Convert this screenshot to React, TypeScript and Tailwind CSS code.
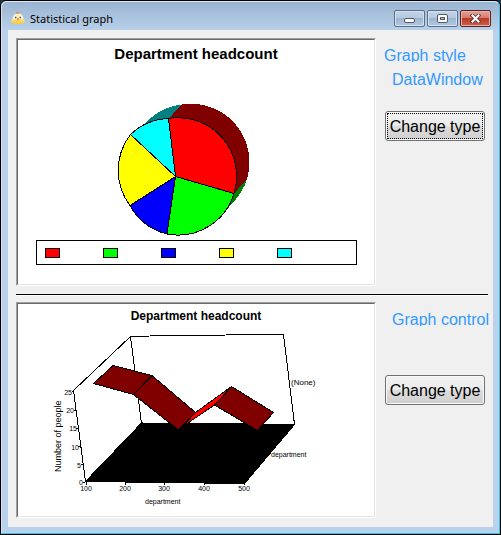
import type { ReactNode } from "react";

const legend = [
  { key: "100", color: "bg-[#ff0000]" },
  { key: "200", color: "bg-[#00ff00]" },
  { key: "300", color: "bg-[#0000ff]" },
  { key: "400", color: "bg-[#ffff00]" },
  { key: "500", color: "bg-[#00ffff]" },
];

function AppIcon() {
  return (
    <svg className="h-4 w-4" viewBox="0 0 16 16" aria-hidden="true">
      <defs>
        <linearGradient id="chick" x1="0" y1="0" x2="0" y2="1">
          <stop offset="0" stopColor="#fff6c8" />
          <stop offset="1" stopColor="#fbcb35" />
        </linearGradient>
      </defs>
      <path d="M6.500 3.500V1l1.500 1L9.500 1.500v2z" fill="#e8382c" />
      <path d="M8 2.500c-3.500 0-4.800 2-5.200 4.500L1.200 9.500c-.4 2.500 3 3.500 6.800 3.500s7.200-1 6.800-3.500L13.200 7c-.4-2.500-1.700-4.500-5.200-4.500z" fill="url(#chick)" />
      <circle cx="5.200" cy="6.500" r="2" fill="#fff" />
      <circle cx="10.800" cy="6.500" r="2" fill="#fff" />
      <circle cx="5.700" cy="6.500" r=".9" fill="#555" />
      <circle cx="10.300" cy="6.500" r=".9" fill="#555" />
      <path d="M6.800 7.200h2.400L8 10z" fill="#ee8122" />
    </svg>
  );
}

function CaptionButton({ label, close, children }: { label: string; close?: boolean; children: ReactNode }) {
  const tone = close
    ? "border-[#5c2020] bg-[linear-gradient(#e4a498,#d5786a_48%,#bb3a25_50%,#cc6048)] shadow-[inset_0_0_0_1px_#e8b0a6]"
    : "border-[#5c6f86] bg-[linear-gradient(#c4d5e8,#b2c7de_48%,#9bb4d0_50%,#b3cae3)] shadow-[inset_0_0_0_1px_#d3e1f0]";
  return (
    <button type="button" aria-label={label} className={`flex h-[17px] w-[31px] items-center justify-center rounded-xs border ${tone}`}>
      {children}
    </button>
  );
}

function Panel({ children }: { children: ReactNode }) {
  return (
    <section className="min-w-0 flex-1 border border-t-[#a0a0a0] border-r-white border-b-white border-l-[#a0a0a0]">
      <div className="border border-t-[#696969] border-r-[#e3e3e3] border-b-[#e3e3e3] border-l-[#696969] bg-white">
        {children}
      </div>
    </section>
  );
}

function ChangeType({ focused }: { focused?: boolean }) {
  return (
    <button
      type="button"
      className="h-[30px] w-[100px] rounded-[3px] border border-[#707070] bg-[linear-gradient(#f2f2f2,#ebebeb_48%,#dddddd_50%,#cfcfcf)] p-px text-base leading-6 whitespace-nowrap text-black shadow-[inset_0_0_0_1px_#fafafa]"
    >
      <span className={`flex h-full items-center justify-center border border-dotted pt-0.5 ${focused ? "border-black" : "border-transparent"}`}>
        Change type
      </span>
    </button>
  );
}

function PieChart() {
  return (
    <svg viewBox="18 68 356 172" className="block w-full" role="img" aria-label="Pie chart of department headcount">
      <g shapeRendering="crispEdges">
        <path d="M168.500 119L181.500 104.500A58.500 58.500 0 0 0 146 122.700L133 137L176 177z" fill="#008080" />
        <path d="M168.500 119L181.500 104.500A58.500 58.500 0 0 1 247 179L234 193.500L176 177z" fill="#800000" />
        <path d="M234 193.500L247 179A58.500 58.500 0 0 1 233 202.500L220 217L176 177z" fill="#008000" />
        <g stroke="#000" strokeWidth="1" strokeLinejoin="round">
          <path d="M175.500 176.500L168.500 118.500A58.500 58.500 0 0 1 234 193.500z" fill="#f00" />
          <path d="M175.500 176.500L234 193.500A58.500 58.500 0 0 1 167 234z" fill="#0f0" />
          <path d="M175.500 176.500L167 234A58.500 58.500 0 0 1 130 205.500z" fill="#00f" />
          <path d="M175.500 176.500L130 205.500A58.500 58.500 0 0 1 130.500 134.500z" fill="#ff0" />
          <path d="M175.500 176.500L130.500 134.500A58.500 58.500 0 0 1 168.500 118.500z" fill="#0ff" />
        </g>
      </g>
    </svg>
  );
}

const yTicks = [
  { v: 25, x: 72, y: 395, tx: 74, ty: 391 },
  { v: 20, x: 74, y: 413, tx: 76, ty: 410 },
  { v: 15, x: 77, y: 431, tx: 78, ty: 428 },
  { v: 10, x: 79, y: 450, tx: 80, ty: 446 },
  { v: 5, x: 81, y: 468, tx: 83, ty: 464 },
  { v: 0, x: 83, y: 485, tx: 85, ty: 482 },
];

const xTicks = [
  { v: 100, x: 86 },
  { v: 200, x: 125 },
  { v: 300, x: 164 },
  { v: 400, x: 204 },
  { v: 500, x: 244 },
];

function RibbonChart() {
  return (
    <svg viewBox="18 324 356 192" className="block w-full" role="img" aria-label="Ribbon chart of number of people by department">
      <g shapeRendering="crispEdges" stroke="#000" strokeWidth="1" fill="none">
        <path d="M85.500 481.500L73.500 390.500L130.500 336.500L169 335.500L283.500 334.500L294.500 424.500M130.500 336.500L141.500 423.500" />
        <path d="M85.500 481.500L141.500 423L294.500 424.500L244.500 483.500z" fill="#000" />
        {yTicks.map((t) => (
          <path key={t.v} d={`M${t.tx - 2} ${t.ty + 0.5}h2`} />
        ))}
        {xTicks.map((t) => (
          <path key={t.v} d={`M${t.x + 0.5} 482v3`} />
        ))}
        <g strokeLinejoin="round">
          <path d="M93.500 383.500L113 365.500L152 375.500L133.500 394.500z" fill="#800000" />
          <path d="M133.500 394.500L152 375.500L195.500 412.500L178.500 430z" fill="#800000" />
          <path d="M182 427L195.500 412.500L231.500 386.500L214.500 405z" fill="#f00" />
          <path d="M214.500 405L231.500 386.500L273.500 412.500L257.500 430.500z" fill="#800000" />
        </g>
      </g>
      <g fill="#000" fontSize="7">
        {yTicks.map((t) => (
          <text key={t.v} x={t.x} y={t.y} textAnchor="end">{t.v}</text>
        ))}
        {xTicks.map((t) => (
          <text key={t.v} x={t.x} y="491" textAnchor="middle">{t.v}</text>
        ))}
        <text x="145" y="504">department</text>
        <text x="271" y="457">department</text>
        <text x="291" y="385" fontSize="8">(None)</text>
        <text transform="translate(61 472) rotate(-90)" fontSize="9">Number of people</text>
      </g>
    </svg>
  );
}

export default function App() {
  return (
    <div className="bg-[#26313c] font-['Liberation_Sans',Arial,sans-serif] text-black">
      <div className="rounded-t-md border border-black bg-[linear-gradient(#99b4d1,#b9d1ea_30px)]">
        <main className="rounded-t-md border border-t-[#dce8f5] border-r-[#35c5e8] border-b-[#35c5e8] border-l-[#d5e3f2] px-1.5 pb-1.5">
          <header className="flex h-7 items-start justify-between pl-0.5">
            <div className="flex items-center gap-1 pt-2 font-['Noto_Sans','Open_Sans',sans-serif]">
              <AppIcon />
              <h1 className="text-[11px] leading-[18px]">Statistical graph</h1>
            </div>
            <div className="flex gap-0.5 pt-2 pr-0.5">
              <CaptionButton label="Minimize">
                <span className="mt-1 h-[5px] w-[11px] rounded-xs border border-[#555b66] bg-white" />
              </CaptionButton>
              <CaptionButton label="Maximize">
                <span className="flex h-[9px] w-[11px] items-center justify-center rounded-xs border border-[#555b66] bg-white">
                  <span className="h-[3px] w-[5px] border border-[#555b66] bg-[#a9c0da]" />
                </span>
              </CaptionButton>
              <CaptionButton label="Close" close>
                <svg className="h-[9px] w-[11px]" viewBox="0 0 11 9" aria-hidden="true">
                  <path d="M2.500 1.500L8.500 7.500M8.500 1.500L2.500 7.500" stroke="#574048" strokeWidth="3.800" strokeLinecap="square" />
                  <path d="M2.500 1.500L8.500 7.500M8.500 1.500L2.500 7.500" stroke="#fff" strokeWidth="2" strokeLinecap="square" />
                </svg>
              </CaptionButton>
            </div>
          </header>

          <div className="bg-[#f0f0f0] pt-2 pb-[9px] pl-2">
            <div className="flex gap-2 pr-1">
              <Panel>
                <h2 className="h-7 pt-1 text-center text-[15px] leading-5 font-bold">Department headcount</h2>
                <PieChart />
                <ul className="mr-[17px] mb-[19px] ml-[18px] flex h-[25px] items-center gap-[43px] border border-black px-2">
                  {legend.map((item) => (
                    <li key={item.key} className={`h-[10px] w-[15px] border border-black ${item.color}`} />
                  ))}
                </ul>
              </Panel>
              <div className="w-[105px] pt-2">
                <p className="h-4 overflow-hidden text-base leading-5 whitespace-nowrap text-[#3399ff]">Graph style</p>
                <p className="mt-2 h-5 pl-2 text-base leading-5 whitespace-nowrap text-[#3399ff]">DataWindow</p>
                <div className="mt-[21px] pl-px">
                  <ChangeType focused />
                </div>
              </div>
            </div>

            <hr className="mt-2 mr-[5px] mb-1.5 h-0.5 border-t border-b border-t-black border-b-white" />

            <div className="flex gap-2 pr-1">
              <Panel>
                <h2 className="h-5 pt-1 text-center text-xs leading-4 font-bold">Department headcount</h2>
                <RibbonChart />
              </Panel>
              <div className="w-[105px] pt-2">
                <p className="h-4 overflow-hidden pl-2 text-base leading-5 whitespace-nowrap text-[#3399ff]">Graph control</p>
                <div className="mt-[49px] pl-px">
                  <ChangeType />
                </div>
              </div>
            </div>
          </div>
        </main>
      </div>
    </div>
  );
}
